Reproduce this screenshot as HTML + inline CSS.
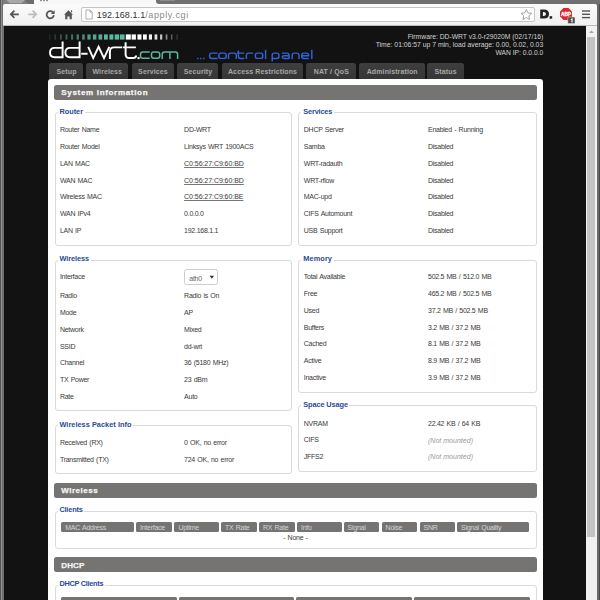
<!DOCTYPE html>
<html><head><meta charset="utf-8"><style>
html,body{margin:0;padding:0;width:600px;height:600px;overflow:hidden;background:#6f6f6f}
.b{position:absolute}
.t{position:absolute;white-space:nowrap;font-family:"Liberation Sans",sans-serif}
svg text{font-family:"Liberation Sans",sans-serif}
u{text-decoration:underline;text-decoration-color:#777}
</style></head><body>
<div class="b" style="left:0.00px;top:0.00px;width:600.00px;height:600.00px;background:#6f6f6f"></div>
<div class="b" style="left:0.00px;top:0.00px;width:1.00px;height:600.00px;background:#555"></div>
<div class="b" style="left:1.00px;top:0.00px;width:1.00px;height:600.00px;background:#8e8e8e"></div>
<div class="b" style="left:2.00px;top:0.00px;width:1.00px;height:600.00px;background:#707070"></div>
<div class="b" style="left:597.00px;top:0.00px;width:3.00px;height:600.00px;background:#6a6a6a"></div>
<div class="b" style="left:598.50px;top:0.00px;width:1.50px;height:600.00px;background:#4a4a4a"></div>
<div class="b" style="left:33.00px;top:0.00px;width:127.00px;height:4.50px;background:#f7f7f7"></div>
<div class="b" style="left:156.00px;top:0.00px;width:444.00px;height:4.00px;background:#707070;border-bottom-left-radius:3px"></div>
<div class="b" style="left:160.00px;top:0.00px;width:15.00px;height:1.00px;background:#8c8c8c"></div>
<svg class="b" style="left:0;top:0" width="60" height="6" viewBox="0 0 60 6">
<path d="M3,0 H34 V4.5 H3 Z" fill="#7e7e7e"/>
<path d="M6.5,0 H25 L21.5,3.2 H9.5 Z" fill="#a9a9a9"/>
<path d="M25,0 H34 V4.5 H33 Q28,4.5 26.5,2 Z" fill="#6c6c6c"/>
<g fill="#666"><rect x="40.3" y="0" width="1.4" height="1.2"/><rect x="43.3" y="0" width="1.4" height="1.2"/><rect x="46.3" y="0" width="1.4" height="1.2"/></g>
</svg>
<div class="b" style="left:3.00px;top:4.00px;width:594.00px;height:22.00px;background:linear-gradient(#fbfbfb,#f0f0f0);border-top-left-radius:2px;border-top-right-radius:2px"></div>
<div class="b" style="left:3.00px;top:25.00px;width:594.00px;height:1.00px;background:#b8b8b8"></div>
<div class="b" style="left:81.00px;top:6.50px;width:453.50px;height:15.80px;background:#fff;border:1px solid #c4c4c4;border-radius:2px;box-sizing:border-box"></div>
<svg class="b" style="left:0;top:0" width="600" height="30" viewBox="0 0 600 30">
<g fill="none" stroke="#555" stroke-width="1.7">
<path d="M18.8,14.3 H11 M14.4,10.7 L10.8,14.3 L14.4,17.9"/>
</g>
<g fill="none" stroke="#bdbdbd" stroke-width="1.7">
<path d="M28.2,14.3 H36 M32.6,10.7 L36.2,14.3 L32.6,17.9"/>
</g>
<path d="M52.9,12.3 A3.6,3.6 0 1 0 53.8,15.1" fill="none" stroke="#555" stroke-width="1.8"/>
<path d="M54.6,10.2 L54.6,14 L50.8,14 Z" fill="#555"/>
<path d="M68.5,10.3 L73,14.8 L71.8,14.8 L71.8,19.2 L69.6,19.2 L69.6,16.5 L67.4,16.5 L67.4,19.2 L65.2,19.2 L65.2,14.8 L64,14.8 Z" fill="#555"/>
<rect x="71" y="10.3" width="1.1" height="2" fill="#555"/>
<path d="M86,10 H90 L92.2,12.2 V19 H86 Z" fill="#fff" stroke="#9a9a9a" stroke-width="0.8"/>
<path d="M90,10 V12.2 H92.2" fill="none" stroke="#9a9a9a" stroke-width="0.8"/>
<path d="M526.3,9.4 L527.9,12.9 L531.6,13.3 L528.9,15.8 L529.6,19.4 L526.3,17.6 L523,19.4 L523.7,15.8 L521,13.3 L524.7,12.9 Z" fill="#fff" stroke="#8a8a8a" stroke-width="0.8" stroke-linejoin="round"/>
<path d="M540.2,9.5 H544 Q549,9.5 549,14 Q549,18.5 544,18.5 H540.2 Z M542.9,11.9 V16.1 H543.6 Q546,16.1 546,14 Q546,11.9 543.6,11.9 Z" fill="#222" fill-rule="evenodd"/>
<rect x="549.6" y="16.2" width="2.6" height="2.5" fill="#222"/>
<path d="M563.5,8 H568.5 L572,11.5 V16.5 L568.5,20 H563.5 L560,16.5 V11.5 Z" fill="#e0262a"/>
<text x="566" y="15.9" font-family="Liberation Sans" font-weight="bold" font-size="4.8" fill="#fff" stroke="#fff" stroke-width="0.3" text-anchor="middle" letter-spacing="-0.1">ABP</text>
<rect x="567.8" y="17" width="7.2" height="6.6" rx="0.9" fill="#4d4d4d" stroke="#e8e8e8" stroke-width="0.5"/>
<path d="M570.6,19.4 L572,18.3 H572.6 V22.6 H571.5 V19.8 L570.9,20.3 Z" fill="#fff"/>
<g fill="#555"><rect x="582" y="10.3" width="8" height="1.4"/><rect x="582" y="13.6" width="8" height="1.4"/><rect x="582" y="16.9" width="8" height="1.4"/></g>
</svg>
<div class="t" style="left:96.8px;top:11.2px;font-size:9px;line-height:9px;color:#333;letter-spacing:0.08px">192.168.1.1<span style="color:#8a8a8a;letter-spacing:0.62px">/apply.cgi</span></div>
<div class="b" style="left:4.00px;top:26.00px;width:582.00px;height:574.00px;background:#121212"></div>
<div class="b" style="left:586.00px;top:26.00px;width:11.00px;height:574.00px;background:#f1f1f1"></div>
<div class="b" style="left:587.20px;top:37.00px;width:7.60px;height:500.00px;background:#c3c3c3"></div>
<svg class="b" style="left:586px;top:26px" width="11" height="12"><path d="M3,7 L5.5,4.5 L8,7 Z" fill="#a3a3a3"/></svg>
<svg class="b" style="left:0;top:0" width="600" height="80" viewBox="0 0 600 80">
<rect x="49.00" y="34.4" width="1.60" height="5.2" fill="#5db6a0" opacity="0.14"/>
<rect x="54.40" y="34.4" width="1.50" height="5.2" fill="#5db6a0" opacity="0.3"/>
<rect x="60.00" y="34.4" width="1.80" height="5.2" fill="#5db6a0" opacity="0.42"/>
<rect x="65.60" y="34.4" width="1.80" height="5.2" fill="#5db6a0" opacity="0.52"/>
<rect x="71.10" y="34.4" width="2.00" height="5.2" fill="#5db6a0" opacity="0.6"/>
<rect x="76.60" y="34.4" width="2.30" height="5.2" fill="#5db6a0" opacity="0.68"/>
<rect x="82.20" y="34.4" width="2.50" height="5.2" fill="#5db6a0" opacity="0.76"/>
<rect x="87.40" y="34.4" width="3.20" height="5.2" fill="#5db6a0" opacity="0.84"/>
<rect x="92.90" y="34.4" width="3.50" height="5.2" fill="#5db6a0" opacity="0.9"/>
<rect x="98.50" y="34.4" width="3.70" height="5.2" fill="#5db6a0" opacity="0.95"/>
<rect x="104.00" y="34.4" width="3.80" height="5.2" fill="#5db6a0" opacity="1"/>
<rect x="109.40" y="34.4" width="4.00" height="5.2" fill="#5db6a0" opacity="1"/>
<rect x="114.70" y="34.4" width="4.40" height="5.2" fill="#5db6a0" opacity="1"/>
<rect x="119.90" y="34.4" width="4.70" height="5.2" fill="#5db6a0" opacity="1"/>
<rect x="125.80" y="34.4" width="5.00" height="5.2" fill="#ffffff" opacity="1"/>
<rect x="131.60" y="34.4" width="4.30" height="5.2" fill="#ffffff" opacity="1"/>
<rect x="137.40" y="34.4" width="4.10" height="5.2" fill="#ffffff" opacity="1"/>
<rect x="143.00" y="34.4" width="3.80" height="5.2" fill="#ffffff" opacity="1"/>
<rect x="148.90" y="34.4" width="3.10" height="5.2" fill="#ffffff" opacity="0.95"/>
<rect x="154.60" y="34.4" width="2.70" height="5.2" fill="#ffffff" opacity="0.88"/>
<rect x="160.00" y="34.4" width="2.30" height="5.2" fill="#ffffff" opacity="0.72"/>
<rect x="165.70" y="34.4" width="1.70" height="5.2" fill="#ffffff" opacity="0.52"/>
<rect x="170.90" y="34.4" width="1.50" height="5.2" fill="#ffffff" opacity="0.33"/>
<rect x="176.50" y="34.4" width="1.20" height="5.2" fill="#ffffff" opacity="0.18"/>
<g transform="translate(0,0.45)"><g fill="none" stroke="#fff" stroke-width="1.95" stroke-linejoin="round">
<path d="M62.6,41 V57.8 M62.6,47.4 H54.6 Q50,47.4 50,52 Q50,56.7 54.6,56.7 H62.6"/>
<path d="M79.6,41 V57.8 M79.6,47.4 H70 Q65.4,47.4 65.4,52 Q65.4,56.7 70,56.7 H79.6"/>
<path d="M81.2,53.3 H87.6"/>
<path d="M88.2,46.4 L93.2,57.6 L98.6,46.4 L104,57.6 L109.3,46.4" stroke-linejoin="miter"/>
<path d="M109.9,58.6 V51.2 Q109.9,46.9 114.2,46.9 H122.3"/>
<path d="M125.6,41.8 V53.8 Q125.6,57.6 129.3,57.6 H132.8 Q136.1,57.6 136.1,55 M123.1,46.9 H135.9"/>
</g>
<rect x="137.5" y="56.6" width="2.1" height="2.1" fill="#fff"/></g>
<g fill="none" stroke="#5db6a0" stroke-width="1.5">
<path d="M149.7,52 H142.8 Q140.5,52 140.5,54.3 V56 Q140.5,58.3 142.8,58.3 H149.7"/>
<rect x="151.5" y="52" width="8.2" height="6.3" rx="2.2"/>
<path d="M162.2,59 V54.3 Q162.2,52 164.5,52 H175.3 Q177.6,52 177.6,54.3 V59 M169.9,52 V59"/>
</g>
<g fill="none" stroke="#3163d8" stroke-width="1.45">
<path d="M217.6,53.1 H211.8 Q209.6,53.1 209.6,55.3 V56.2 Q209.6,58.4 211.8,58.4 H217.6"/>
<rect x="218.9" y="53.1" width="7.3" height="5.3" rx="2"/>
<path d="M228.5,59.1 V55.3 Q228.5,53.1 230.7,53.1 H234.1 Q236.3,53.1 236.3,55.3 V59.1"/>
<path d="M238.4,50.6 V56.2 Q238.4,58.4 240.6,58.4 H244.3 M237,53.1 H244.2"/>
<path d="M246.4,59.1 V55.3 Q246.4,53.1 248.6,53.1 H253.1"/>
<rect x="255.4" y="53.1" width="7.3" height="5.3" rx="2"/>
<path d="M265.6,49.8 V59.1"/>
<path d="M272.2,61.5 V55.3 Q272.2,53.1 274.4,53.1 H276.8 Q279,53.1 279,55.3 V56.2 Q279,58.4 276.8,58.4 H272.2"/>
<path d="M282,53.1 H286.8 Q289,53.1 289,55.3 V59.1 M289,55.8 H284.1 Q282.2,55.8 282.2,57.1 Q282.2,58.4 284.1,58.4 H289"/>
<path d="M292.2,59.1 V55.3 Q292.2,53.1 294.4,53.1 H296.8 Q299,53.1 299,55.3 V59.1"/>
<path d="M308.7,58.4 H303.9 Q301.7,58.4 301.7,56.2 V55.3 Q301.7,53.1 303.9,53.1 H306.4 Q308.6,53.1 308.6,55.3 V55.8 H301.7"/>
<path d="M311.8,49.8 V59.1"/>
</g>
<g fill="#3163d8"><rect x="197" y="57.8" width="1.5" height="1.4"/><rect x="200" y="57.8" width="1.5" height="1.4"/><rect x="203" y="57.8" width="1.5" height="1.4"/></g>
</svg>
<div class="t" style="right:56.80px;top:34.36px;font-size:6.78px;line-height:6.78px;color:#d2d2d2;">Firmware: DD-WRT v3.0-r29020M (02/17/16)</div>
<div class="t" style="right:56.80px;top:42.13px;font-size:6.82px;line-height:6.82px;color:#d2d2d2;">Time: 01:06:57 up 7 min, load average: 0.00, 0.02, 0.03</div>
<div class="t" style="right:56.80px;top:50.13px;font-size:6.7px;line-height:6.7px;color:#d2d2d2;">WAN IP: 0.0.0.0</div>
<div class="b" style="left:49.20px;top:63.20px;width:34.10px;height:15.80px;background:linear-gradient(#3e3e3e,#363636);border-radius:2.5px 2.5px 0 0"></div>
<div class="t" style="left:49.20px;width:34.10px;text-align:center;top:67.77px;font-size:7px;line-height:7px;font-weight:bold;color:#a8a8a8;letter-spacing:0.12px;text-indent:0.6px">Setup</div>
<div class="b" style="left:85.70px;top:63.20px;width:42.60px;height:15.80px;background:linear-gradient(#3e3e3e,#363636);border-radius:2.5px 2.5px 0 0"></div>
<div class="t" style="left:85.70px;width:42.60px;text-align:center;top:67.77px;font-size:7px;line-height:7px;font-weight:bold;color:#a8a8a8;letter-spacing:0.12px;text-indent:0.6px">Wireless</div>
<div class="b" style="left:131.70px;top:63.20px;width:42.00px;height:15.80px;background:linear-gradient(#3e3e3e,#363636);border-radius:2.5px 2.5px 0 0"></div>
<div class="t" style="left:131.70px;width:42.00px;text-align:center;top:67.77px;font-size:7px;line-height:7px;font-weight:bold;color:#a8a8a8;letter-spacing:0.12px;text-indent:0.6px">Services</div>
<div class="b" style="left:177.20px;top:63.20px;width:41.10px;height:15.80px;background:linear-gradient(#3e3e3e,#363636);border-radius:2.5px 2.5px 0 0"></div>
<div class="t" style="left:177.20px;width:41.10px;text-align:center;top:67.77px;font-size:7px;line-height:7px;font-weight:bold;color:#a8a8a8;letter-spacing:0.12px;text-indent:0.6px">Security</div>
<div class="b" style="left:222.00px;top:63.20px;width:80.50px;height:15.80px;background:linear-gradient(#3e3e3e,#363636);border-radius:2.5px 2.5px 0 0"></div>
<div class="t" style="left:222.00px;width:80.50px;text-align:center;top:67.77px;font-size:7px;line-height:7px;font-weight:bold;color:#a8a8a8;letter-spacing:0.12px;text-indent:0.6px">Access Restrictions</div>
<div class="b" style="left:306.30px;top:63.20px;width:49.50px;height:15.80px;background:linear-gradient(#3e3e3e,#363636);border-radius:2.5px 2.5px 0 0"></div>
<div class="t" style="left:306.30px;width:49.50px;text-align:center;top:67.77px;font-size:7px;line-height:7px;font-weight:bold;color:#a8a8a8;letter-spacing:0.12px;text-indent:0.6px">NAT / QoS</div>
<div class="b" style="left:359.20px;top:63.20px;width:65.50px;height:15.80px;background:linear-gradient(#3e3e3e,#363636);border-radius:2.5px 2.5px 0 0"></div>
<div class="t" style="left:359.20px;width:65.50px;text-align:center;top:67.77px;font-size:7px;line-height:7px;font-weight:bold;color:#a8a8a8;letter-spacing:0.12px;text-indent:0.6px">Administration</div>
<div class="b" style="left:427.00px;top:63.20px;width:36.70px;height:15.80px;background:linear-gradient(#3e3e3e,#363636);border-radius:2.5px 2.5px 0 0"></div>
<div class="t" style="left:427.00px;width:36.70px;text-align:center;top:67.77px;font-size:7px;line-height:7px;font-weight:bold;color:#a8a8a8;letter-spacing:0.12px;text-indent:0.6px">Status</div>
<div class="b" style="left:47.80px;top:79.00px;width:495.20px;height:521.00px;background:#fff;border-radius:3px 3px 0 0"></div>
<div class="b" style="left:54.00px;top:85.00px;width:482.50px;height:15.00px;background:#767472;border-radius:2.5px"></div>
<div class="t" style="left:61.30px;top:88.93px;font-size:8.0px;line-height:8.0px;color:#f6f6f6;font-weight:bold;letter-spacing:0.68px;-webkit-text-stroke:0.25px #f6f6f6">System Information</div>
<div class="b" style="left:54.50px;top:112.30px;width:237.20px;height:133.50px;border:1px solid #dadada;border-radius:3px;box-sizing:border-box"></div>
<div class="b" style="left:57.50px;top:111.30px;width:27.70px;height:3.00px;background:#fff"></div>
<div class="t" style="left:59.40px;top:108.08px;font-size:7.35px;line-height:7.35px;color:#294a9a;font-weight:bold;letter-spacing:0px">Router</div>
<div class="b" style="left:298.40px;top:112.30px;width:238.60px;height:133.50px;border:1px solid #dadada;border-radius:3px;box-sizing:border-box"></div>
<div class="b" style="left:301.40px;top:111.30px;width:32.30px;height:3.00px;background:#fff"></div>
<div class="t" style="left:303.30px;top:108.08px;font-size:7.35px;line-height:7.35px;color:#294a9a;font-weight:bold;letter-spacing:-0.17px">Services</div>
<div class="t" style="left:59.90px;top:126.47px;font-size:7.0px;line-height:7.0px;color:#3a3a3a;letter-spacing:-0.26px;word-spacing:0.65px">Router Name</div>
<div class="t" style="left:184.10px;top:126.47px;font-size:7.0px;line-height:7.0px;color:#3a3a3a;letter-spacing:-0.26px;word-spacing:0.65px">DD-WRT</div>
<div class="t" style="left:59.90px;top:143.22px;font-size:7.0px;line-height:7.0px;color:#3a3a3a;letter-spacing:-0.26px;word-spacing:0.65px">Router Model</div>
<div class="t" style="left:184.10px;top:143.22px;font-size:7.0px;line-height:7.0px;color:#3a3a3a;letter-spacing:-0.26px;word-spacing:0.65px">Linksys WRT 1900ACS</div>
<div class="t" style="left:59.90px;top:159.97px;font-size:7.0px;line-height:7.0px;color:#3a3a3a;letter-spacing:-0.26px;word-spacing:0.65px">LAN MAC</div>
<div class="t" style="left:184.10px;top:159.97px;font-size:7.0px;line-height:7.0px;color:#3a3a3a;letter-spacing:-0.26px;word-spacing:0.65px"><u style="letter-spacing:-0.06px">C0:56:27:C9:60:BD</u></div>
<div class="t" style="left:59.90px;top:176.72px;font-size:7.0px;line-height:7.0px;color:#3a3a3a;letter-spacing:-0.26px;word-spacing:0.65px">WAN MAC</div>
<div class="t" style="left:184.10px;top:176.72px;font-size:7.0px;line-height:7.0px;color:#3a3a3a;letter-spacing:-0.26px;word-spacing:0.65px"><u style="letter-spacing:-0.06px">C0:56:27:C9:60:BD</u></div>
<div class="t" style="left:59.90px;top:193.47px;font-size:7.0px;line-height:7.0px;color:#3a3a3a;letter-spacing:-0.26px;word-spacing:0.65px">Wireless MAC</div>
<div class="t" style="left:184.10px;top:193.47px;font-size:7.0px;line-height:7.0px;color:#3a3a3a;letter-spacing:-0.26px;word-spacing:0.65px"><u style="letter-spacing:-0.06px">C0:56:27:C9:60:BE</u></div>
<div class="t" style="left:59.90px;top:210.22px;font-size:7.0px;line-height:7.0px;color:#3a3a3a;letter-spacing:-0.26px;word-spacing:0.65px">WAN IPv4</div>
<div class="t" style="left:184.10px;top:210.22px;font-size:7.0px;line-height:7.0px;color:#3a3a3a;letter-spacing:-0.26px;word-spacing:0.65px">0.0.0.0</div>
<div class="t" style="left:59.90px;top:226.97px;font-size:7.0px;line-height:7.0px;color:#3a3a3a;letter-spacing:-0.26px;word-spacing:0.65px">LAN IP</div>
<div class="t" style="left:184.10px;top:226.97px;font-size:7.0px;line-height:7.0px;color:#3a3a3a;letter-spacing:-0.26px;word-spacing:0.65px">192.168.1.1</div>
<div class="t" style="left:303.80px;top:126.47px;font-size:7.0px;line-height:7.0px;color:#3a3a3a;letter-spacing:-0.26px;word-spacing:0.65px">DHCP Server</div>
<div class="t" style="left:428.00px;top:126.47px;font-size:7.0px;line-height:7.0px;color:#3a3a3a;letter-spacing:-0.26px;word-spacing:0.65px">Enabled - Running</div>
<div class="t" style="left:303.80px;top:143.22px;font-size:7.0px;line-height:7.0px;color:#3a3a3a;letter-spacing:-0.26px;word-spacing:0.65px">Samba</div>
<div class="t" style="left:428.00px;top:143.22px;font-size:7.0px;line-height:7.0px;color:#3a3a3a;letter-spacing:-0.26px;word-spacing:0.65px">Disabled</div>
<div class="t" style="left:303.80px;top:159.97px;font-size:7.0px;line-height:7.0px;color:#3a3a3a;letter-spacing:-0.26px;word-spacing:0.65px">WRT-radauth</div>
<div class="t" style="left:428.00px;top:159.97px;font-size:7.0px;line-height:7.0px;color:#3a3a3a;letter-spacing:-0.26px;word-spacing:0.65px">Disabled</div>
<div class="t" style="left:303.80px;top:176.72px;font-size:7.0px;line-height:7.0px;color:#3a3a3a;letter-spacing:-0.26px;word-spacing:0.65px">WRT-rflow</div>
<div class="t" style="left:428.00px;top:176.72px;font-size:7.0px;line-height:7.0px;color:#3a3a3a;letter-spacing:-0.26px;word-spacing:0.65px">Disabled</div>
<div class="t" style="left:303.80px;top:193.47px;font-size:7.0px;line-height:7.0px;color:#3a3a3a;letter-spacing:-0.26px;word-spacing:0.65px">MAC-upd</div>
<div class="t" style="left:428.00px;top:193.47px;font-size:7.0px;line-height:7.0px;color:#3a3a3a;letter-spacing:-0.26px;word-spacing:0.65px">Disabled</div>
<div class="t" style="left:303.80px;top:210.22px;font-size:7.0px;line-height:7.0px;color:#3a3a3a;letter-spacing:-0.26px;word-spacing:0.65px">CIFS Automount</div>
<div class="t" style="left:428.00px;top:210.22px;font-size:7.0px;line-height:7.0px;color:#3a3a3a;letter-spacing:-0.26px;word-spacing:0.65px">Disabled</div>
<div class="t" style="left:303.80px;top:226.97px;font-size:7.0px;line-height:7.0px;color:#3a3a3a;letter-spacing:-0.26px;word-spacing:0.65px">USB Support</div>
<div class="t" style="left:428.00px;top:226.97px;font-size:7.0px;line-height:7.0px;color:#3a3a3a;letter-spacing:-0.26px;word-spacing:0.65px">Disabled</div>
<div class="b" style="left:54.50px;top:259.50px;width:237.20px;height:151.90px;border:1px solid #dadada;border-radius:3px;box-sizing:border-box"></div>
<div class="b" style="left:57.50px;top:258.50px;width:33.20px;height:3.00px;background:#fff"></div>
<div class="t" style="left:59.40px;top:254.78px;font-size:7.35px;line-height:7.35px;color:#294a9a;font-weight:bold;letter-spacing:-0.05px">Wireless</div>
<div class="b" style="left:298.40px;top:259.50px;width:238.60px;height:133.40px;border:1px solid #dadada;border-radius:3px;box-sizing:border-box"></div>
<div class="b" style="left:301.40px;top:258.50px;width:32.30px;height:3.00px;background:#fff"></div>
<div class="t" style="left:303.30px;top:254.78px;font-size:7.35px;line-height:7.35px;color:#294a9a;font-weight:bold;letter-spacing:0.1px">Memory</div>
<div class="t" style="left:59.90px;top:272.97px;font-size:7.0px;line-height:7.0px;color:#3a3a3a;letter-spacing:-0.26px;word-spacing:0.65px">Interface</div>
<div class="t" style="left:59.90px;top:292.22px;font-size:7.0px;line-height:7.0px;color:#3a3a3a;letter-spacing:-0.26px;word-spacing:0.65px">Radio</div>
<div class="t" style="left:184.10px;top:292.22px;font-size:7.0px;line-height:7.0px;color:#3a3a3a;letter-spacing:-0.26px;word-spacing:0.65px">Radio is On</div>
<div class="t" style="left:59.90px;top:309.01px;font-size:7.0px;line-height:7.0px;color:#3a3a3a;letter-spacing:-0.26px;word-spacing:0.65px">Mode</div>
<div class="t" style="left:184.10px;top:309.01px;font-size:7.0px;line-height:7.0px;color:#3a3a3a;letter-spacing:-0.26px;word-spacing:0.65px">AP</div>
<div class="t" style="left:59.90px;top:325.80px;font-size:7.0px;line-height:7.0px;color:#3a3a3a;letter-spacing:-0.26px;word-spacing:0.65px">Network</div>
<div class="t" style="left:184.10px;top:325.80px;font-size:7.0px;line-height:7.0px;color:#3a3a3a;letter-spacing:-0.26px;word-spacing:0.65px">Mixed</div>
<div class="t" style="left:59.90px;top:342.59px;font-size:7.0px;line-height:7.0px;color:#3a3a3a;letter-spacing:-0.26px;word-spacing:0.65px">SSID</div>
<div class="t" style="left:184.10px;top:342.59px;font-size:7.0px;line-height:7.0px;color:#3a3a3a;letter-spacing:-0.26px;word-spacing:0.65px">dd-wrt</div>
<div class="t" style="left:59.90px;top:359.38px;font-size:7.0px;line-height:7.0px;color:#3a3a3a;letter-spacing:-0.26px;word-spacing:0.65px">Channel</div>
<div class="t" style="left:184.10px;top:359.38px;font-size:7.0px;line-height:7.0px;color:#3a3a3a;letter-spacing:-0.26px;word-spacing:0.65px">36 (5180 MHz)</div>
<div class="t" style="left:59.90px;top:376.17px;font-size:7.0px;line-height:7.0px;color:#3a3a3a;letter-spacing:-0.26px;word-spacing:0.65px">TX Power</div>
<div class="t" style="left:184.10px;top:376.17px;font-size:7.0px;line-height:7.0px;color:#3a3a3a;letter-spacing:-0.26px;word-spacing:0.65px">23 dBm</div>
<div class="t" style="left:59.90px;top:392.96px;font-size:7.0px;line-height:7.0px;color:#3a3a3a;letter-spacing:-0.26px;word-spacing:0.65px">Rate</div>
<div class="t" style="left:184.10px;top:392.96px;font-size:7.0px;line-height:7.0px;color:#3a3a3a;letter-spacing:-0.26px;word-spacing:0.65px">Auto</div>
<div class="b" style="left:184.00px;top:269.30px;width:34.30px;height:16.00px;background:#fff;border:1px solid #cdcdcd;border-radius:2.5px;box-sizing:border-box"></div>
<div class="t" style="left:189.30px;top:274.97px;font-size:7.0px;line-height:7.0px;color:#666;letter-spacing:-0.26px;word-spacing:0.65px">ath0</div>
<svg class="b" style="left:209px;top:275px" width="6" height="5"><path d="M0.6,0.8 H5 L2.8,3.8 Z" fill="#333"/></svg>
<div class="t" style="left:303.80px;top:273.22px;font-size:7.0px;line-height:7.0px;color:#3a3a3a;letter-spacing:-0.26px;word-spacing:0.65px">Total Available</div>
<div class="t" style="left:428.00px;top:273.22px;font-size:7.0px;line-height:7.0px;color:#3a3a3a;letter-spacing:-0.26px;word-spacing:0.65px">502.5 MB / 512.0 MB</div>
<div class="t" style="left:303.80px;top:290.01px;font-size:7.0px;line-height:7.0px;color:#3a3a3a;letter-spacing:-0.26px;word-spacing:0.65px">Free</div>
<div class="t" style="left:428.00px;top:290.01px;font-size:7.0px;line-height:7.0px;color:#3a3a3a;letter-spacing:-0.26px;word-spacing:0.65px">465.2 MB / 502.5 MB</div>
<div class="t" style="left:303.80px;top:306.80px;font-size:7.0px;line-height:7.0px;color:#3a3a3a;letter-spacing:-0.26px;word-spacing:0.65px">Used</div>
<div class="t" style="left:428.00px;top:306.80px;font-size:7.0px;line-height:7.0px;color:#3a3a3a;letter-spacing:-0.26px;word-spacing:0.65px">37.2 MB / 502.5 MB</div>
<div class="t" style="left:303.80px;top:323.59px;font-size:7.0px;line-height:7.0px;color:#3a3a3a;letter-spacing:-0.26px;word-spacing:0.65px">Buffers</div>
<div class="t" style="left:428.00px;top:323.59px;font-size:7.0px;line-height:7.0px;color:#3a3a3a;letter-spacing:-0.26px;word-spacing:0.65px">3.2 MB / 37.2 MB</div>
<div class="t" style="left:303.80px;top:340.38px;font-size:7.0px;line-height:7.0px;color:#3a3a3a;letter-spacing:-0.26px;word-spacing:0.65px">Cached</div>
<div class="t" style="left:428.00px;top:340.38px;font-size:7.0px;line-height:7.0px;color:#3a3a3a;letter-spacing:-0.26px;word-spacing:0.65px">8.1 MB / 37.2 MB</div>
<div class="t" style="left:303.80px;top:357.17px;font-size:7.0px;line-height:7.0px;color:#3a3a3a;letter-spacing:-0.26px;word-spacing:0.65px">Active</div>
<div class="t" style="left:428.00px;top:357.17px;font-size:7.0px;line-height:7.0px;color:#3a3a3a;letter-spacing:-0.26px;word-spacing:0.65px">8.9 MB / 37.2 MB</div>
<div class="t" style="left:303.80px;top:373.96px;font-size:7.0px;line-height:7.0px;color:#3a3a3a;letter-spacing:-0.26px;word-spacing:0.65px">Inactive</div>
<div class="t" style="left:428.00px;top:373.96px;font-size:7.0px;line-height:7.0px;color:#3a3a3a;letter-spacing:-0.26px;word-spacing:0.65px">3.9 MB / 37.2 MB</div>
<div class="b" style="left:54.50px;top:425.30px;width:237.20px;height:48.90px;border:1px solid #dadada;border-radius:3px;box-sizing:border-box"></div>
<div class="b" style="left:57.50px;top:424.30px;width:75.50px;height:3.00px;background:#fff"></div>
<div class="t" style="left:59.40px;top:420.78px;font-size:7.35px;line-height:7.35px;color:#294a9a;font-weight:bold;letter-spacing:0.04px">Wireless Packet Info</div>
<div class="t" style="left:59.90px;top:439.22px;font-size:7.0px;line-height:7.0px;color:#3a3a3a;letter-spacing:-0.26px;word-spacing:0.65px">Received (RX)</div>
<div class="t" style="left:184.10px;top:439.22px;font-size:7.0px;line-height:7.0px;color:#3a3a3a;letter-spacing:-0.26px;word-spacing:0.65px">0 OK, no error</div>
<div class="t" style="left:59.90px;top:455.97px;font-size:7.0px;line-height:7.0px;color:#3a3a3a;letter-spacing:-0.26px;word-spacing:0.65px">Transmitted (TX)</div>
<div class="t" style="left:184.10px;top:455.97px;font-size:7.0px;line-height:7.0px;color:#3a3a3a;letter-spacing:-0.26px;word-spacing:0.65px">724 OK, no error</div>
<div class="b" style="left:298.40px;top:405.20px;width:238.60px;height:66.70px;border:1px solid #dadada;border-radius:3px;box-sizing:border-box"></div>
<div class="b" style="left:301.40px;top:404.20px;width:48.00px;height:3.00px;background:#fff"></div>
<div class="t" style="left:303.30px;top:401.18px;font-size:7.35px;line-height:7.35px;color:#294a9a;font-weight:bold;letter-spacing:-0.1px">Space Usage</div>
<div class="t" style="left:303.80px;top:419.72px;font-size:7.0px;line-height:7.0px;color:#3a3a3a;letter-spacing:-0.26px;word-spacing:0.65px">NVRAM</div>
<div class="t" style="left:428.00px;top:419.72px;font-size:7.0px;line-height:7.0px;color:#3a3a3a;letter-spacing:-0.26px;word-spacing:0.65px">22.42 KB / 64 KB</div>
<div class="t" style="left:303.80px;top:436.47px;font-size:7.0px;line-height:7.0px;color:#3a3a3a;letter-spacing:-0.26px;word-spacing:0.65px">CIFS</div>
<div class="t" style="left:303.80px;top:453.22px;font-size:7.0px;line-height:7.0px;color:#3a3a3a;letter-spacing:-0.26px;word-spacing:0.65px">JFFS2</div>
<div class="t" style="left:428.00px;top:436.57px;font-size:7.0px;line-height:7.0px;color:#9a9a9a;font-style:italic;letter-spacing:0.02px">(Not mounted)</div>
<div class="t" style="left:428.00px;top:453.17px;font-size:7.0px;line-height:7.0px;color:#9a9a9a;font-style:italic;letter-spacing:0.02px">(Not mounted)</div>
<div class="b" style="left:54.00px;top:482.50px;width:482.50px;height:15.00px;background:#767472;border-radius:2.5px"></div>
<div class="t" style="left:61.30px;top:486.53px;font-size:8.0px;line-height:8.0px;color:#f6f6f6;font-weight:bold;letter-spacing:0.5px;-webkit-text-stroke:0.25px #f6f6f6">Wireless</div>
<div class="b" style="left:54.50px;top:511.20px;width:482.50px;height:37.40px;border:1px solid #dadada;border-radius:3px;box-sizing:border-box"></div>
<div class="b" style="left:57.50px;top:510.20px;width:26.70px;height:3.00px;background:#fff"></div>
<div class="t" style="left:59.40px;top:505.78px;font-size:7.35px;line-height:7.35px;color:#294a9a;font-weight:bold;letter-spacing:-0.18px">Clients</div>
<div class="b" style="left:61.30px;top:522.30px;width:72.30px;height:9.40px;background:#767472;border-radius:1.5px"></div>
<div class="t" style="left:65.30px;top:523.97px;font-size:7.0px;line-height:7.0px;color:#d4d4d4;letter-spacing:-0.26px;word-spacing:0.65px">MAC Address</div>
<div class="b" style="left:136.00px;top:522.30px;width:36.40px;height:9.40px;background:#767472;border-radius:1.5px"></div>
<div class="t" style="left:140.00px;top:523.97px;font-size:7.0px;line-height:7.0px;color:#d4d4d4;letter-spacing:-0.26px;word-spacing:0.65px">Interface</div>
<div class="b" style="left:174.40px;top:522.30px;width:44.60px;height:9.40px;background:#767472;border-radius:1.5px"></div>
<div class="t" style="left:178.40px;top:523.97px;font-size:7.0px;line-height:7.0px;color:#d4d4d4;letter-spacing:-0.26px;word-spacing:0.65px">Uptime</div>
<div class="b" style="left:221.00px;top:522.30px;width:36.00px;height:9.40px;background:#767472;border-radius:1.5px"></div>
<div class="t" style="left:225.00px;top:523.97px;font-size:7.0px;line-height:7.0px;color:#d4d4d4;letter-spacing:-0.26px;word-spacing:0.65px">TX Rate</div>
<div class="b" style="left:259.00px;top:522.30px;width:35.60px;height:9.40px;background:#767472;border-radius:1.5px"></div>
<div class="t" style="left:263.00px;top:523.97px;font-size:7.0px;line-height:7.0px;color:#d4d4d4;letter-spacing:-0.26px;word-spacing:0.65px">RX Rate</div>
<div class="b" style="left:297.00px;top:522.30px;width:44.50px;height:9.40px;background:#767472;border-radius:1.5px"></div>
<div class="t" style="left:301.00px;top:523.97px;font-size:7.0px;line-height:7.0px;color:#d4d4d4;letter-spacing:-0.26px;word-spacing:0.65px">Info</div>
<div class="b" style="left:343.60px;top:522.30px;width:35.40px;height:9.40px;background:#767472;border-radius:1.5px"></div>
<div class="t" style="left:347.60px;top:523.97px;font-size:7.0px;line-height:7.0px;color:#d4d4d4;letter-spacing:-0.26px;word-spacing:0.65px">Signal</div>
<div class="b" style="left:381.60px;top:522.30px;width:35.40px;height:9.40px;background:#767472;border-radius:1.5px"></div>
<div class="t" style="left:385.60px;top:523.97px;font-size:7.0px;line-height:7.0px;color:#d4d4d4;letter-spacing:-0.26px;word-spacing:0.65px">Noise</div>
<div class="b" style="left:419.60px;top:522.30px;width:35.40px;height:9.40px;background:#767472;border-radius:1.5px"></div>
<div class="t" style="left:423.60px;top:523.97px;font-size:7.0px;line-height:7.0px;color:#d4d4d4;letter-spacing:-0.26px;word-spacing:0.65px">SNR</div>
<div class="b" style="left:457.00px;top:522.30px;width:72.00px;height:9.40px;background:#767472;border-radius:1.5px"></div>
<div class="t" style="left:461.00px;top:523.97px;font-size:7.0px;line-height:7.0px;color:#d4d4d4;letter-spacing:-0.26px;word-spacing:0.65px">Signal Quality</div>
<div class="t" style="left:283.20px;top:534.17px;font-size:7.0px;line-height:7.0px;color:#3a3a3a;letter-spacing:-0.26px;word-spacing:0.65px">- None -</div>
<div class="b" style="left:54.00px;top:557.30px;width:482.50px;height:15.20px;background:#767472;border-radius:2.5px"></div>
<div class="t" style="left:61.30px;top:561.83px;font-size:8.0px;line-height:8.0px;color:#f6f6f6;font-weight:bold;letter-spacing:0.12px;-webkit-text-stroke:0.25px #f6f6f6">DHCP</div>
<div class="b" style="left:54.50px;top:584.70px;width:482.50px;height:55.30px;border:1px solid #dadada;border-radius:3px;box-sizing:border-box"></div>
<div class="b" style="left:57.50px;top:583.70px;width:47.40px;height:3.00px;background:#fff"></div>
<div class="t" style="left:59.40px;top:580.18px;font-size:7.35px;line-height:7.35px;color:#294a9a;font-weight:bold;letter-spacing:-0.28px">DHCP Clients</div>
<div class="b" style="left:61.00px;top:596.70px;width:115.50px;height:9.30px;background:#767472;border-radius:1.5px"></div>
<div class="b" style="left:179.00px;top:596.70px;width:115.00px;height:9.30px;background:#767472;border-radius:1.5px"></div>
<div class="b" style="left:296.00px;top:596.70px;width:116.00px;height:9.30px;background:#767472;border-radius:1.5px"></div>
<div class="b" style="left:414.00px;top:596.70px;width:116.00px;height:9.30px;background:#767472;border-radius:1.5px"></div>
</body></html>
